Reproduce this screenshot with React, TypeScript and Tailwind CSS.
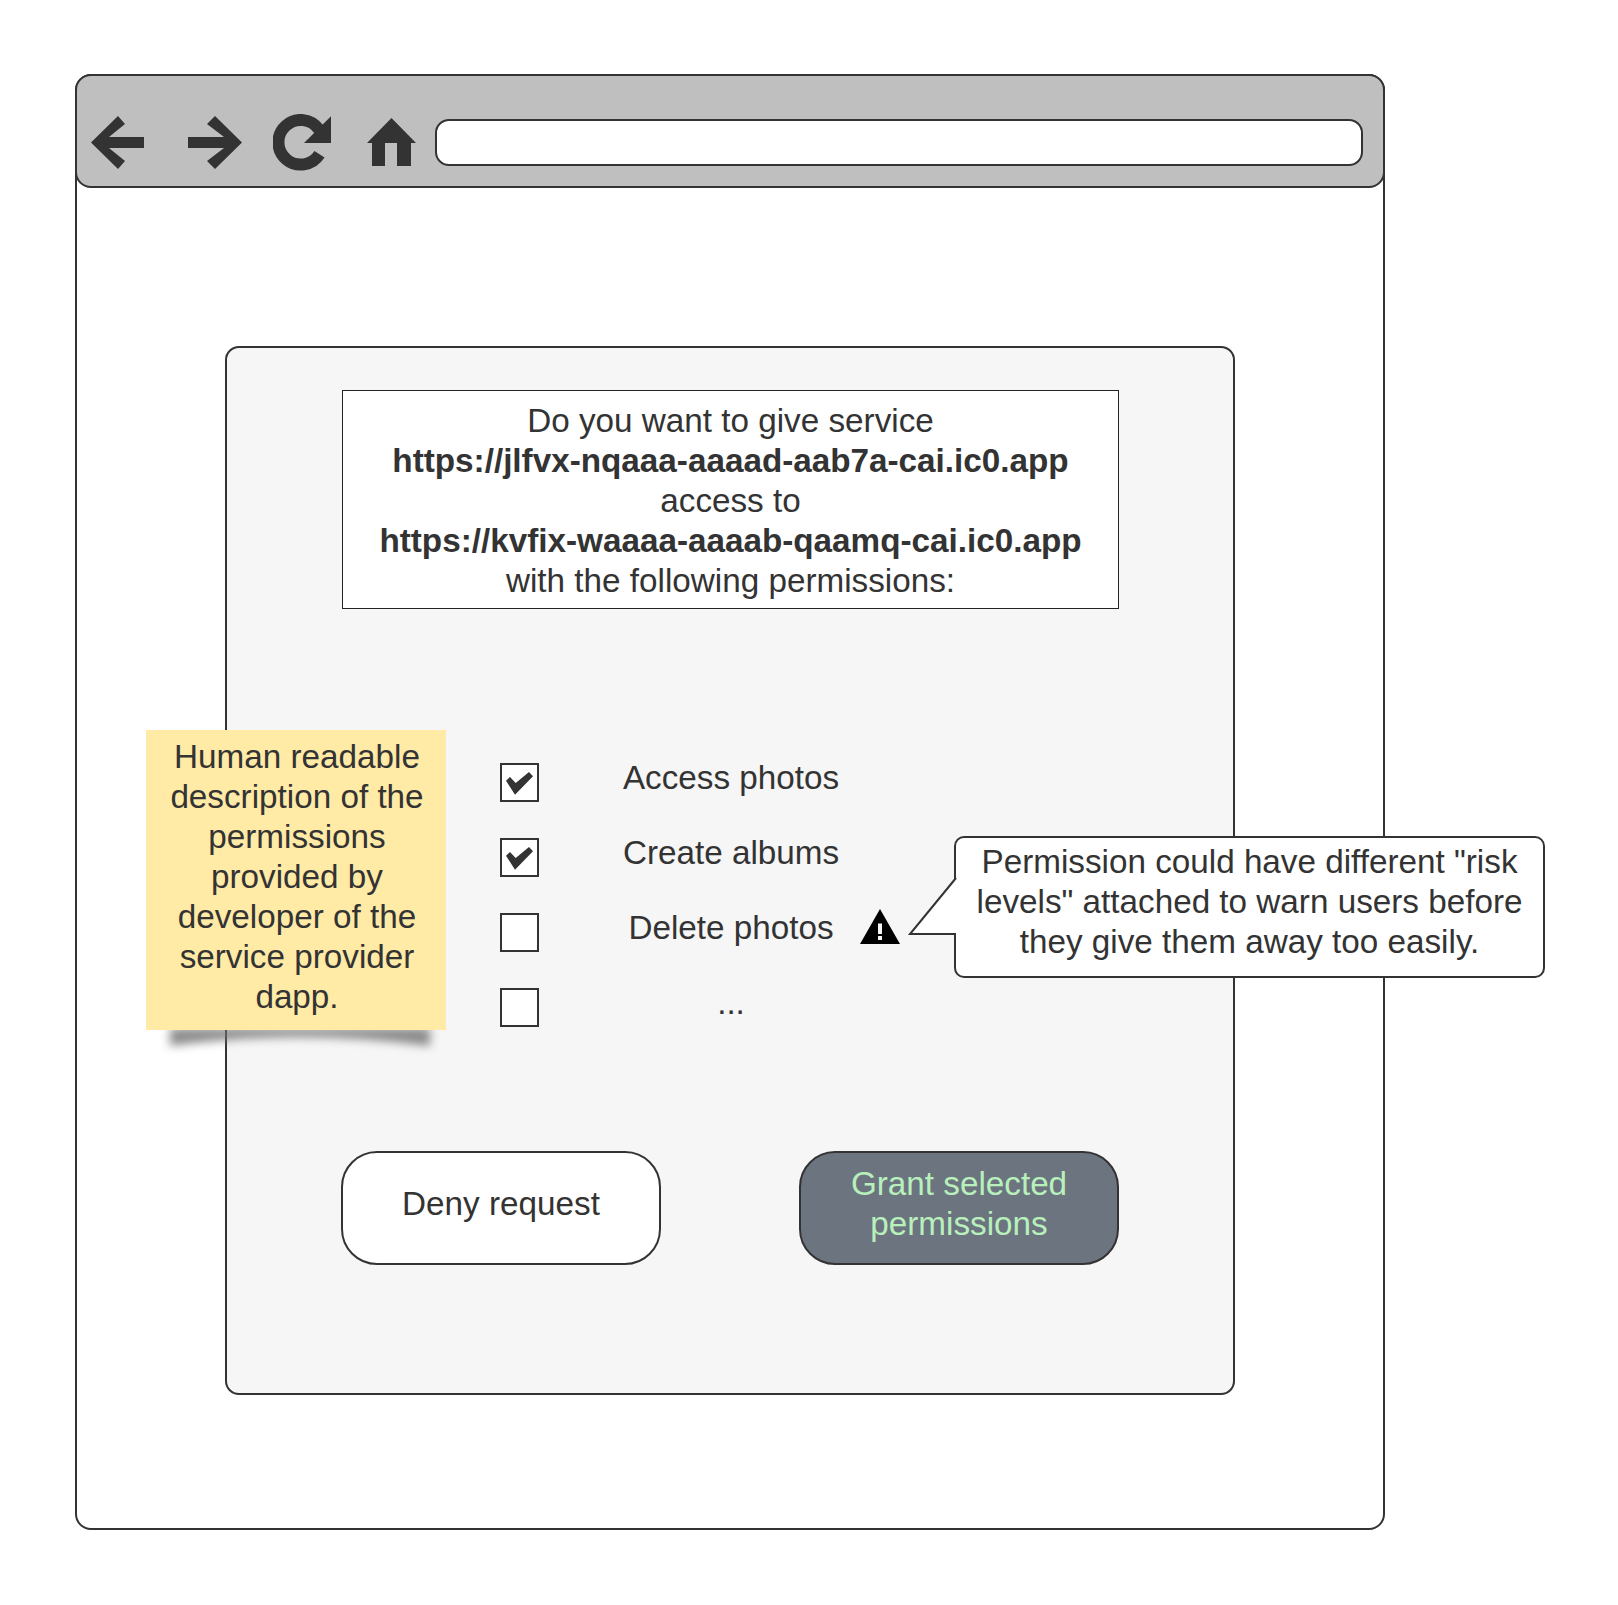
const Check = () => (
  <svg width="35" height="35" viewBox="0 0 35 35" className="block">
    <path d="M4 15.7 L8 12 L13.7 18 L27 7 L31 11.3 L13 29.7 Z" fill="#333333" />
  </svg>
);

const Box = ({ checked }: { checked?: boolean }) => (
  <div className="w-[39px] h-[39px] border-2 border-[#333333] bg-white shrink-0">{checked && <Check />}</div>
);

const Row = ({ checked, label, warn }: { checked?: boolean; label: string; warn?: boolean }) => (
  <div className="flex items-center h-[39px] mb-[36px]">
    <Box checked={checked} />
    <div className="w-[262px] ml-[61px] text-center pb-[9px] whitespace-nowrap">{label}</div>
    {warn && (
      <svg width="40" height="35" viewBox="0 0 40 35" className="block -ml-[2px] -mt-[12px]">
        <path fillRule="evenodd" d="M20 0 L40 35 L0 35 Z M18 14.5 L22 14.5 L22 25 L18 25 Z M18 27 L22 27 L22 31 L18 31 Z" fill="#000000" />
      </svg>
    )}
  </div>
);

export default function App() {
  return (
    <div className="relative w-[1618px] h-[1605px] bg-white pt-[74px] pl-[75px] text-[33.25px] leading-[40px] text-[#333333] font-['Liberation_Sans',Arial,sans-serif] overflow-hidden">
      <div className="w-[1310px] h-[1456px] border-2 border-[#333333] rounded-[16px] bg-white">
        <div className="-mx-[2px] -mt-[2px] h-[114px] border-2 border-[#333333] rounded-[16px] bg-[#bfbfbf] flex items-end pb-[20px] pl-[14px]">
          <div className="flex items-center h-[56px] -mb-[4px]">
            <svg width="53" height="53" viewBox="0 0 53 53" className="block">
              <path d="M0 26.5 L27 0 L34 8 L18 21 L53 21 L53 32 L18 32 L34 45 L27 53 Z" fill="#333333" />
            </svg>
            <svg width="54" height="53" viewBox="0 0 54 53" className="block ml-[44px]">
              <path d="M54 26.5 L27 0 L19 8 L36 21 L0 21 L0 32 L36 32 L19 45 L27 53 Z" fill="#333333" />
            </svg>
            <svg width="59" height="57" viewBox="0 0 59 57" className="block ml-[31px]">
              <path d="M46.5 40.3 A22.3 22.3 0 1 1 46 15.5" fill="none" stroke="#333333" strokeWidth="12" />
              <path d="M58 2.3 L58 29 L31 29 Z" fill="#333333" />
            </svg>
            <svg width="49" height="48" viewBox="0 0 49 48" className="block ml-[35px]">
              <path d="M24.5 0 L49 25 L44 25 L44 48 L30 48 L30 25 L18 25 L18 48 L5 48 L5 25 L0 25 Z" fill="#333333" />
            </svg>
          </div>
          <div className="ml-[19px] w-[928px] h-[47px] border-2 border-[#333333] rounded-[14px] bg-white" />
        </div>

        <div className="ml-[148px] mt-[158px] w-[1010px] h-[1049px] border-2 border-[#333333] rounded-[14px] bg-[#f6f6f6]">
          <div className="ml-[115px] mt-[42px] w-[777px] h-[219px] border-[1.5px] border-[#222222] bg-white text-center pt-[10px]">
            <div>Do you want to give service</div>
            <div className="font-bold">https://jlfvx-nqaaa-aaaad-aab7a-cai.ic0.app</div>
            <div>access to</div>
            <div className="font-bold">https://kvfix-waaaa-aaaab-qaamq-cai.ic0.app</div>
            <div>with the following permissions:</div>
          </div>

          <div className="ml-[273px] mt-[154px]">
            <Row checked label="Access photos" />
            <Row checked label="Create albums" />
            <Row label="Delete photos" warn />
            <Row label="..." />
          </div>

          <div className="ml-[114px] mt-[124px] w-[778px] flex justify-between">
            <div className="w-[320px] h-[114px] border-2 border-[#333333] rounded-[36px] bg-white flex items-center justify-center text-center pb-[9px]">
              Deny request
            </div>
            <div className="w-[320px] h-[114px] border-2 border-[#333333] rounded-[36px] bg-[#6c7480] text-[#b8f0bc] flex items-center justify-center text-center pb-[9px]">
              <div>
                Grant selected
                <br />
                permissions
              </div>
            </div>
          </div>
        </div>
      </div>

      <svg width="300" height="30" viewBox="0 0 300 30" className="absolute left-[146px] top-[1024px] blur-[5px] overflow-visible">
        <path d="M24 4 L284 4 L284 22 Q150 4 24 22 Z" fill="#6f6f6f" fillOpacity="0.8" />
      </svg>
      <div className="absolute left-[146px] top-[730px] w-[300px] h-[300px] bg-[#ffeaa6] text-center pt-[7px] pl-[2px]">
        Human readable
        <br />
        description of the
        <br />
        permissions
        <br />
        provided by
        <br />
        developer of the
        <br />
        service provider
        <br />
        dapp.
      </div>

      <div className="absolute left-[954px] top-[836px] w-[591px] h-[142px] border-2 border-[#333333] rounded-[10px] bg-white text-center pt-[4px]">
        Permission could have different "risk
        <br />
        levels" attached to warn users before
        <br />
        they give them away too easily.
        <svg width="50" height="62" viewBox="0 0 50 62" className="absolute -left-[48px] top-[40px] overflow-visible">
          <path d="M48 0 L2 56 L48 56" fill="#ffffff" stroke="#333333" strokeWidth="2" />
        </svg>
      </div>
    </div>
  );
}
